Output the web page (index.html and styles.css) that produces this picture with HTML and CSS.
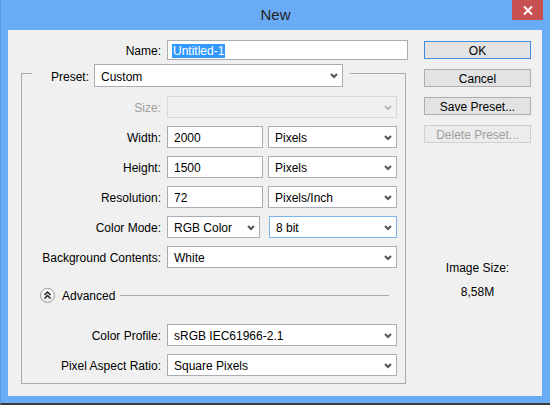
FILE: index.html
```html
<!DOCTYPE html>
<html>
<head>
<meta charset="utf-8">
<link rel="stylesheet" href="styles.css">
</head>
<body>
<div class="window">
  <div class="titlebar">
    <span class="title">New</span>
    <div class="close">
      <svg width="10" height="9" viewBox="0 0 10 9"><path d="M1 0.5 L9 8.5 M9 0.5 L1 8.5" stroke="#fff" stroke-width="2"/></svg>
    </div>
  </div>
  <div class="client">
    <div class="left">
      <div class="row name-row">
        <span class="lbl">Name:</span>
        <div class="input name-input"><span class="sel">Untitled-1</span></div>
      </div>
      <div class="preset-row">
        <span class="preset-lbl">Preset:</span>
        <div class="select preset-select"><span>Custom</span><svg class="chev" width="8" height="6" viewBox="0 0 8 6"><polyline points="1,1 4,4 7,1" fill="none" stroke="#555" stroke-width="2"/></svg></div>
      </div>
      <div class="group">
        <div class="row">
          <span class="lbl disabled">Size:</span>
          <div class="select full dis"><span></span><svg class="chev" width="8" height="6" viewBox="0 0 8 6"><polyline points="1,1 4,4 7,1" fill="none" stroke="#b8b8b8" stroke-width="2"/></svg></div>
        </div>
        <div class="row">
          <span class="lbl">Width:</span>
          <div class="input narrow">2000</div>
          <div class="select units"><span>Pixels</span><svg class="chev" width="8" height="6" viewBox="0 0 8 6"><polyline points="1,1 4,4 7,1" fill="none" stroke="#555" stroke-width="2"/></svg></div>
        </div>
        <div class="row">
          <span class="lbl">Height:</span>
          <div class="input narrow">1500</div>
          <div class="select units"><span>Pixels</span><svg class="chev" width="8" height="6" viewBox="0 0 8 6"><polyline points="1,1 4,4 7,1" fill="none" stroke="#555" stroke-width="2"/></svg></div>
        </div>
        <div class="row">
          <span class="lbl">Resolution:</span>
          <div class="input narrow">72</div>
          <div class="select units"><span>Pixels/Inch</span><svg class="chev" width="8" height="6" viewBox="0 0 8 6"><polyline points="1,1 4,4 7,1" fill="none" stroke="#555" stroke-width="2"/></svg></div>
        </div>
        <div class="row">
          <span class="lbl">Color Mode:</span>
          <div class="select mode"><span>RGB Color</span><svg class="chev" width="8" height="6" viewBox="0 0 8 6"><polyline points="1,1 4,4 7,1" fill="none" stroke="#555" stroke-width="2"/></svg></div>
          <div class="select bits"><span>8 bit</span><svg class="chev" width="8" height="6" viewBox="0 0 8 6"><polyline points="1,1 4,4 7,1" fill="none" stroke="#555" stroke-width="2"/></svg></div>
        </div>
        <div class="row">
          <span class="lbl">Background Contents:</span>
          <div class="select full"><span>White</span><svg class="chev" width="8" height="6" viewBox="0 0 8 6"><polyline points="1,1 4,4 7,1" fill="none" stroke="#555" stroke-width="2"/></svg></div>
        </div>
        <div class="advanced">
          <svg class="adv-icon" width="15" height="15" viewBox="0 0 15 15">
            <defs><linearGradient id="g" x1="0" y1="0" x2="0" y2="1"><stop offset="0" stop-color="#ffffff"/><stop offset="1" stop-color="#e6e6e6"/></linearGradient></defs>
            <circle cx="7.5" cy="7.5" r="7" fill="url(#g)" stroke="#9a9a9a"/>
            <polyline points="4.5,7 7.5,4 10.5,7" fill="none" stroke="#222" stroke-width="1.5"/>
            <polyline points="4.5,10.5 7.5,7.5 10.5,10.5" fill="none" stroke="#222" stroke-width="1.5"/>
          </svg>
          <span class="adv-text">Advanced</span>
          <span class="adv-line"></span>
        </div>
        <div class="row profile">
          <span class="lbl">Color Profile:</span>
          <div class="select full"><span>sRGB IEC61966-2.1</span><svg class="chev" width="8" height="6" viewBox="0 0 8 6"><polyline points="1,1 4,4 7,1" fill="none" stroke="#555" stroke-width="2"/></svg></div>
        </div>
        <div class="row">
          <span class="lbl">Pixel Aspect Ratio:</span>
          <div class="select full"><span>Square Pixels</span><svg class="chev" width="8" height="6" viewBox="0 0 8 6"><polyline points="1,1 4,4 7,1" fill="none" stroke="#555" stroke-width="2"/></svg></div>
        </div>
      </div>
    </div>
    <div class="right">
      <div class="btn default">OK</div>
      <div class="btn">Cancel</div>
      <div class="btn">Save Preset...</div>
      <div class="btn disabled">Delete Preset...</div>
      <div class="imgsize">Image Size:</div>
      <div class="imgsize-val">8,58M</div>
    </div>
  </div>
</div>
</body>
</html>
```

FILE: styles.css
```css
* { box-sizing: border-box; }
body {
  margin: 0;
  font-family: "Liberation Sans", Arial, sans-serif;
  font-size: 12px;
  color: #000;
}
.window {
  width: 550px;
  height: 405px;
  background: #6aabf5;
  border-left: 1px solid #5c9be3;
  border-bottom: 2px solid #3a3a3a;
  display: flex;
  flex-direction: column;
  position: relative;
}
.titlebar {
  height: 30px;
  display: flex;
  justify-content: center;
  align-items: center;
}
.title {
  font-size: 15px;
  color: #222;
  margin-top: -2px;
}
.close {
  position: absolute;
  top: 0;
  left: 511px;
  width: 31px;
  height: 20px;
  background: #c75050;
  display: flex;
  align-items: center;
  justify-content: center;
}
.client {
  margin: 0 8px 0 7px;
  height: 366px;
  background: #f0f0f0;
  display: flex;
  padding: 10px 0 0 13px;
}
.left {
  width: 387px;
  display: flex;
  flex-direction: column;
}
.row {
  display: flex;
  align-items: center;
  gap: 6px;
  height: 22px;
}
.lbl {
  width: 139px;
  text-align: right;
  white-space: nowrap;
  padding-top: 2px;
}
.lbl.disabled { color: #a0a0a0; }
.name-row { height: 20px; }
.name-row .lbl { width: 140px; }
.input, .select {
  height: 22px;
  border: 1px solid #abadb3;
  background: #fff;
  display: flex;
  align-items: center;
  padding-left: 6px;
  padding-top: 2px;
  white-space: nowrap;
}
.name-input {
  width: 241px;
  height: 20px;
  padding-left: 4px;
}
.sel {
  background: #3399ff;
  color: #fff;
  padding: 0 1px;
  line-height: 14px;
}
.select {
  justify-content: space-between;
  padding-right: 4px;
}
.chev { flex: none; margin-top: -1px; }
.preset-row {
  position: relative;
  margin-top: 4px;
  margin-left: 11px;
  width: 318px;
  height: 23px;
  background: #f0f0f0;
  display: flex;
  align-items: center;
  gap: 5px;
}
.preset-lbl {
  width: 57px;
  text-align: right;
  padding-top: 2px;
}
.preset-select {
  width: 249px;
  height: 23px;
}
.group {
  margin-top: -14px;
  width: 385px;
  height: 311px;
  border: 1px solid #a9a9a9;
  padding-top: 22px;
  display: flex;
  flex-direction: column;
  gap: 8px;
}
.full { width: 230px; }
.select.dis {
  background: #f0f0f0;
  border-color: #d9d9d9;
}
.narrow { width: 96px; }
.units { width: 129px; margin-left: -1px; }
.mode { width: 93px; }
.bits {
  width: 128px;
  margin-left: 3px;
  border-color: #7eb4ea;
}
.advanced {
  margin-top: 11px;
  height: 16px;
  display: flex;
  align-items: center;
  padding-left: 18px;
  padding-right: 16px;
}
.adv-icon { flex: none; }
.adv-text { margin-left: 7px; padding-top: 1px; }
.adv-line {
  flex: 1;
  height: 1px;
  background: #a9a9a9;
  margin-left: 5px;
}
.profile { margin-top: 13px; }
.right {
  margin-left: 16px;
  width: 107px;
  padding-top: 1px;
  display: flex;
  flex-direction: column;
  gap: 10px;
}
.btn {
  height: 18px;
  border: 1px solid #acacac;
  background: #e3e3e3;
  display: flex;
  align-items: center;
  justify-content: center;
  padding-top: 1px;
}
.btn.default { border-color: #3d8ee0; }
.btn.disabled {
  color: #a0a0a0;
  border-color: #d0d0d0;
  background: #ececec;
}
.imgsize {
  margin-top: 108px;
  text-align: center;
  line-height: 14px;
}
.imgsize-val {
  text-align: center;
  line-height: 14px;
}
```
